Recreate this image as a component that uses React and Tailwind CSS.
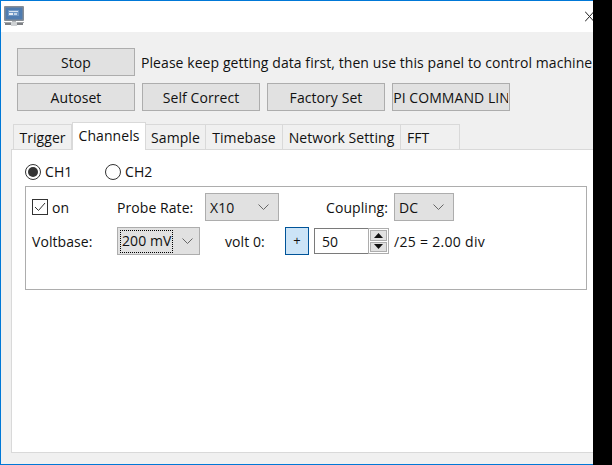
import React from "react";

const Btn = ({ children, className = "" }) => (
  <button className={`w-[118px] h-[28px] bg-[#e1e1e1] border border-[#adadad] text-[14px] text-[#111] overflow-hidden whitespace-nowrap flex items-center justify-center ${className}`}>
    {children}
  </button>
);

const Tab = ({ children, w, active, className = "justify-center" }) =>
  active ? (
    <div className={`${w} h-[28px] bg-white border border-b-0 border-[#d9d9d9] text-[14px] flex items-start justify-center pt-[2px] -mb-[1px] relative`}>
      {children}
    </div>
  ) : (
    <div className={`${w} h-[25px] bg-[#f0f0f0] border border-l-0 border-b-0 border-[#d9d9d9] text-[14px] flex items-center ${className}`}>
      {children}
    </div>
  );

const Chevron = () => (
  <svg width="11" height="6" viewBox="0 0 11 6" fill="none" stroke="#666" strokeWidth="1">
    <path d="M0.5 0.5 L5.5 5.5 L10.5 0.5" />
  </svg>
);

const Select = ({ value, w, focus, pad = "pl-[3px]", mr = "mr-[9px]" }) => (
  <div className={`${w} h-[28px] bg-[#e1e1e1] border border-[#adadad] flex items-center justify-between ${pad}`}>
    <span className={focus ? "border border-dotted border-black px-[1px] leading-[20px] h-[23px] flex items-center" : "px-[1px]"}>{value}</span>
    <span className={mr}>
      <Chevron />
    </span>
  </div>
);

const Radio = ({ on }) => (
  <span className="w-[16px] h-[16px] rounded-full border border-[#333] flex items-center justify-center bg-white">
    {on && <span className="w-[10px] h-[10px] rounded-full bg-[#333]" />}
  </span>
);

export default function App() {
  return (
    <div className="w-[612px] h-[465px] bg-black overflow-hidden font-['Open_Sans','Noto_Sans',sans-serif] tracking-[0.07px] text-[#111]">
      <div className="w-[593px] h-[465px] flex flex-col border-t border-l border-b border-[#0078d7] overflow-hidden bg-white">
        {/* title bar */}
        <div className="h-[31px] shrink-0 bg-white flex items-center justify-between">
          <svg className="ml-[3px] mb-[1px]" width="20" height="20" viewBox="0 0 20 20">
            <rect x="0" y="0" width="20" height="15" rx="1" fill="#868d95" />
            <rect x="1.5" y="1.5" width="17" height="12" fill="#4f7cb0" />
            <rect x="4" y="4" width="11" height="6" fill="#6f98c6" />
            <rect x="5" y="5" width="9" height="1" fill="#d5e2f0" />
            <rect x="5" y="7" width="4" height="2" fill="#e6edf5" />
            <rect x="10" y="7" width="3" height="2" fill="#c4d5e8" />
            <rect x="8" y="15" width="4" height="2" fill="#b5b8bb" />
            <rect x="0" y="16" width="20" height="1" fill="#a4a7aa" />
            <rect x="1" y="17" width="18" height="2" fill="#7d8084" />
            <rect x="7" y="16" width="6" height="4" fill="#cfd2d4" />
          </svg>
          <svg className="-mr-[1px]" width="9" height="11" viewBox="0 0 9 11" fill="none" stroke="#222" strokeWidth="1">
            <path d="M0 0.5 L9 10.5 M0 10.5 L9 0.5" />
          </svg>
        </div>

        {/* panel */}
        <div className="flex-1 bg-[#f0f0f0] flex flex-col min-h-0">
          <div className="pl-[16px] pt-[16px] flex flex-col gap-[7px]">
            <div className="flex items-center gap-[6px]">
              <Btn>Stop</Btn>
              <span className="text-[14px] whitespace-nowrap">Please keep getting data first, then use this panel to control machine</span>
            </div>
            <div className="flex gap-[7px]">
              <Btn>Autoset</Btn>
              <Btn>Self Correct</Btn>
              <Btn>Factory Set</Btn>
              <Btn>
                <span className="w-[114px] overflow-hidden flex justify-center">
                  <span className="whitespace-nowrap shrink-0">API COMMAND LINE</span>
                </span>
              </Btn>
            </div>
          </div>

          {/* tabs */}
          <div className="pl-[12px] mt-[11px] flex items-end h-[27px] relative z-10">
            <div className="w-[59px] h-[25px] bg-[#f0f0f0] border border-b-0 border-[#d9d9d9] text-[14px] flex items-center justify-center">Trigger</div>
            <Tab w="w-[74px]" active>Channels</Tab>
            <Tab w="w-[60px]">Sample</Tab>
            <Tab w="w-[77px]">Timebase</Tab>
            <Tab w="w-[118px]">Network Setting</Tab>
            <Tab w="w-[59px]" className="justify-start pl-[6px]">FFT</Tab>
          </div>

          {/* tab page */}
          <div className="flex-1 ml-[10px] bg-white border-t border-l border-b border-[#d9d9d9] mb-[11px] pl-[13px] text-[14px]">
            <div className="flex items-center h-[36px] pt-[7px]">
              <Radio on />
              <span className="ml-[4px] w-[60px]">CH1</span>
              <Radio />
              <span className="ml-[4px]">CH2</span>
            </div>
            <div className="w-[562px] h-[104px] border border-[#adadad] pl-[6px] pt-[6px] flex flex-col gap-[6px]">
              <div className="flex items-center h-[28px]">
                <span className="w-[16px] h-[16px] border border-[#333] flex items-center justify-center">
                  <svg width="12" height="10" viewBox="0 0 12 10" fill="none" stroke="#333" strokeWidth="1">
                    <path d="M1 5 L4.5 8.5 L11 1" />
                  </svg>
                </span>
                <span className="ml-[4px] w-[65px]">on</span>
                <span className="w-[88px]">Probe Rate:</span>
                <Select value="X10" w="w-[74px]" />
                <span className="ml-[47px] w-[68px]">Coupling:</span>
                <Select value="DC" w="w-[60px]" />
              </div>
              <div className="flex items-center h-[28px]">
                <span className="w-[85px]">Voltbase:</span>
                <Select value="200 mV" w="w-[83px]" focus pad="pl-[2px]" mr="mr-[6px]" />
                <span className="ml-[25px] w-[60px]">volt 0:</span>
                <button className="w-[24px] h-[28px] bg-[#cce4f7] border border-[#005499] text-[13px] flex items-center justify-center">+</button>
                <div className="ml-[5px] w-[75px] h-[26px] bg-white border border-[#7a7a7a] flex items-center justify-between">
                  <span className="ml-[7px]">50</span>
                  <div className="w-[21px] h-[26px] -mr-[1px] border border-[#adadad] bg-white flex flex-col gap-[1px] p-[1px]">
                    <div className="flex-1 bg-[#e1e1e1] border border-[#adadad] flex items-center justify-center">
                      <svg width="9" height="5" viewBox="0 0 9 5"><path d="M4.5 0 L9 5 L0 5 Z" fill="#111" /></svg>
                    </div>
                    <div className="flex-1 bg-[#e1e1e1] border border-[#adadad] flex items-center justify-center">
                      <svg width="9" height="5" viewBox="0 0 9 5"><path d="M0 0 L9 0 L4.5 5 Z" fill="#111" /></svg>
                    </div>
                  </div>
                </div>
                <span className="ml-[5px] tracking-[0.3px]">/25 = 2.00 div</span>
              </div>
            </div>
          </div>
        </div>
      </div>
    </div>
  );
}
